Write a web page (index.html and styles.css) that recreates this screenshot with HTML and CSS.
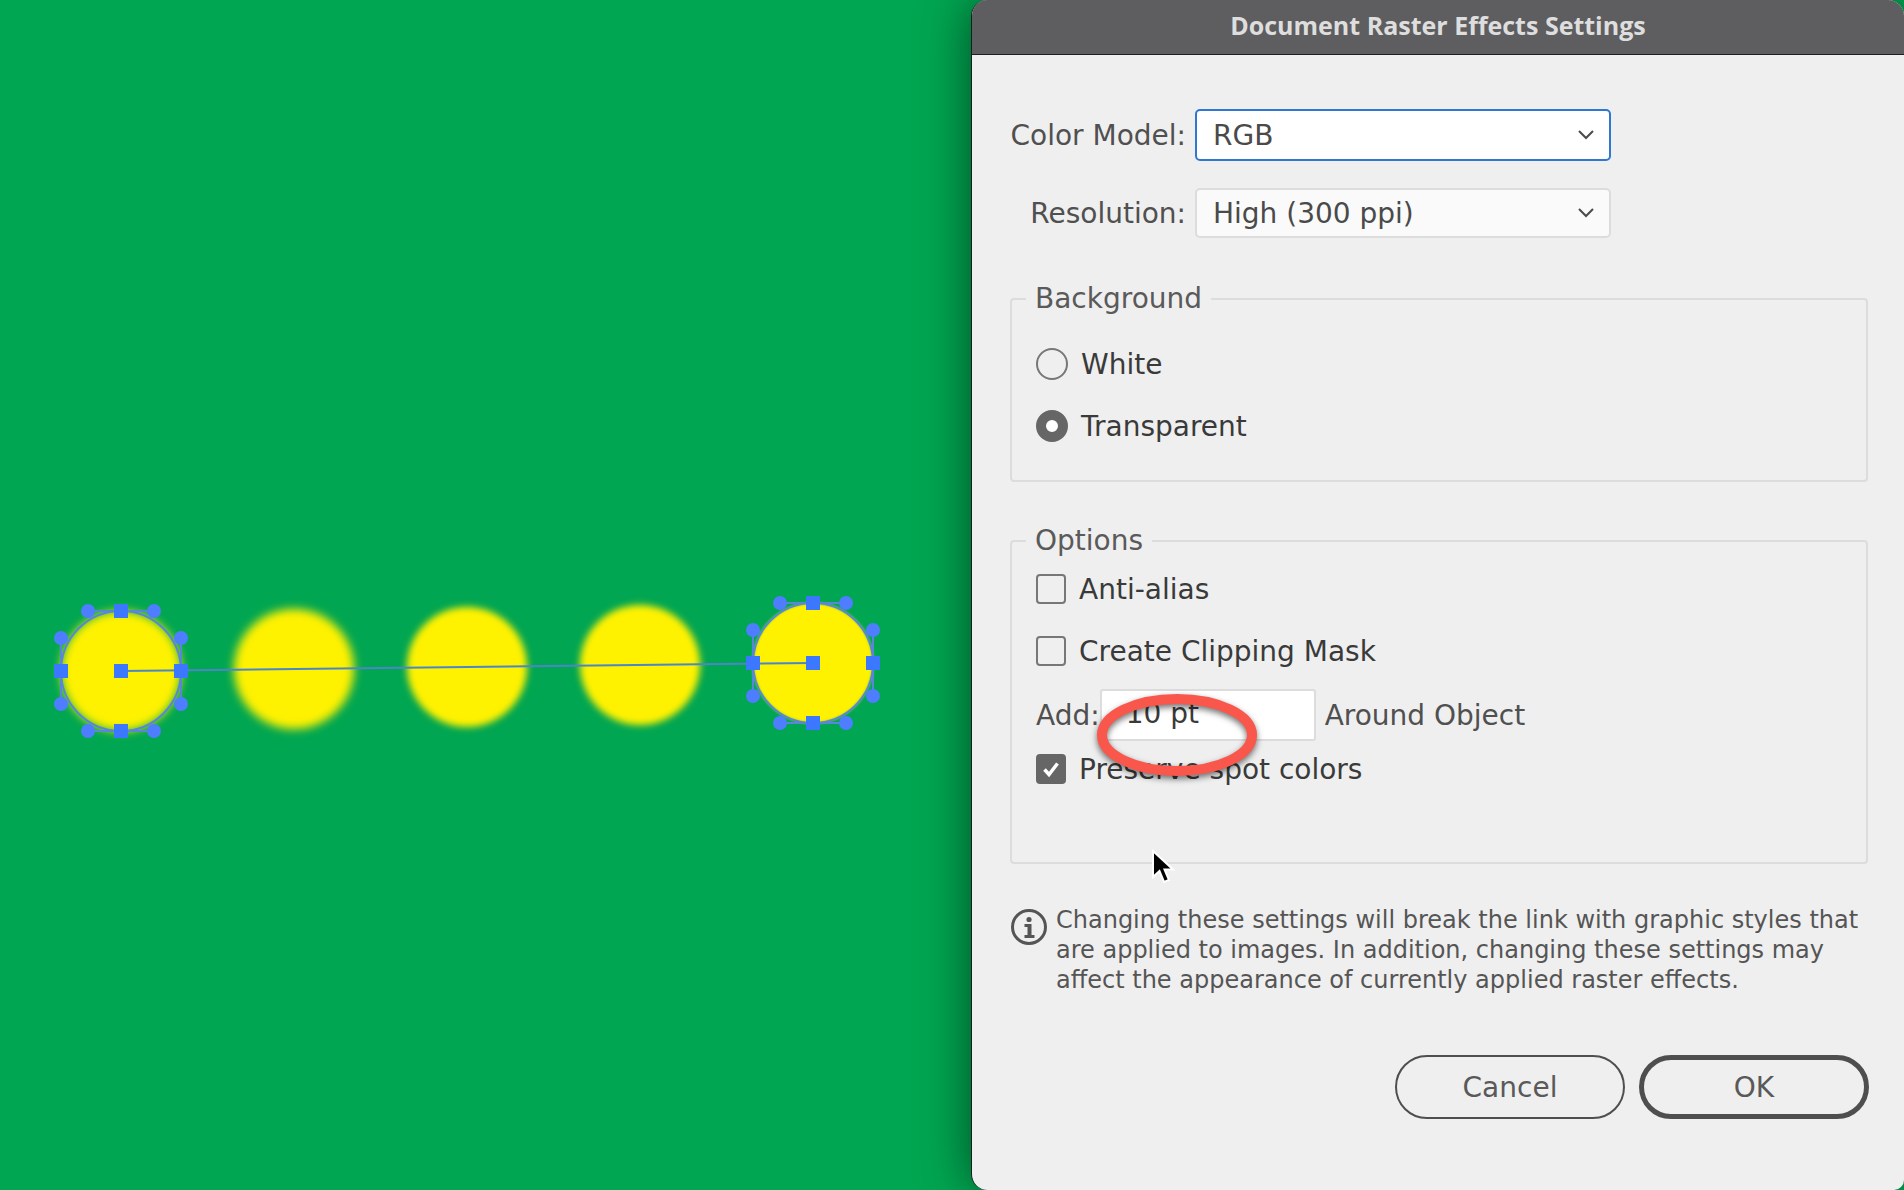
FILE: index.html
```html
<!DOCTYPE html>
<html lang="en">

<head>
    <meta charset="UTF-8">
    <meta name="viewport" content="width=device-width, initial-scale=1.0">
    <title>Document Raster Effects Settings</title>
    <link rel="stylesheet" href="styles.css">
</head>

<body>
    <div class="artboard">
        <svg class="art" width="972" height="1190" viewBox="0 0 972 1190">
            <defs>
                <filter id="soft1" x="-30%" y="-30%" width="160%" height="160%"><feGaussianBlur stdDeviation="5"></feGaussianBlur></filter>
                <filter id="soft2" x="-30%" y="-30%" width="160%" height="160%"><feGaussianBlur stdDeviation="3.5"></feGaussianBlur></filter>
                <filter id="soft3" x="-30%" y="-30%" width="160%" height="160%"><feGaussianBlur stdDeviation="1.5"></feGaussianBlur></filter>
            </defs>
            <circle class="dot" cx="121" cy="671" r="60" filter="url(#soft1)"></circle>
            <circle class="dot" cx="294" cy="669" r="60" filter="url(#soft1)"></circle>
            <circle class="dot" cx="467" cy="667" r="60" filter="url(#soft2)"></circle>
            <circle class="dot" cx="640" cy="665" r="60" filter="url(#soft2)"></circle>
            <circle class="dot" cx="813" cy="663" r="60" filter="url(#soft3)"></circle>

            <line class="spine" x1="121" y1="671" x2="813" y2="663"></line>

            <g transform="translate(121 671)">
                <use href="#handles"></use>
            </g>
            <g transform="translate(813 663)">
                <g id="handles">
                    <circle class="outline" r="60"></circle>
                    <path class="arms" d="M-33 -60H33M-33 60H33M-60 -33V33M60 -33V33"></path>
                    <circle class="knob" cx="-33" cy="-60" r="7"></circle>
                    <circle class="knob" cx="33" cy="-60" r="7"></circle>
                    <circle class="knob" cx="-33" cy="60" r="7"></circle>
                    <circle class="knob" cx="33" cy="60" r="7"></circle>
                    <circle class="knob" cx="-60" cy="-33" r="7"></circle>
                    <circle class="knob" cx="-60" cy="33" r="7"></circle>
                    <circle class="knob" cx="60" cy="-33" r="7"></circle>
                    <circle class="knob" cx="60" cy="33" r="7"></circle>
                    <rect class="anchor" x="-7" y="-67" width="14" height="14"></rect>
                    <rect class="anchor" x="-7" y="53" width="14" height="14"></rect>
                    <rect class="anchor" x="-67" y="-7" width="14" height="14"></rect>
                    <rect class="anchor" x="53" y="-7" width="14" height="14"></rect>
                    <rect class="anchor" x="-7" y="-7" width="14" height="14"></rect>
                </g>
            </g>
        </svg>
    </div>

    <div class="dialog">
        <div class="titlebar">Document Raster Effects Settings</div>

        <div class="content">
            <div class="field field-first">
                <label class="field-label">Color Model:</label>
                <div class="select select-focus">
                    <span>RGB</span>
                    <svg class="chevron" width="18" height="12" viewBox="0 0 18 12"><path d="M2 2l7 7 7-7"></path></svg>
                </div>
            </div>
            <div class="field">
                <label class="field-label">Resolution:</label>
                <div class="select">
                    <span>High (300 ppi)</span>
                    <svg class="chevron" width="18" height="12" viewBox="0 0 18 12"><path d="M2 2l7 7 7-7"></path></svg>
                </div>
            </div>

            <div class="group group-bg">
                <div class="legend">Background</div>
                <div class="option">
                    <span class="radio"></span>
                    <span>White</span>
                </div>
                <div class="option">
                    <span class="radio radio-on"></span>
                    <span>Transparent</span>
                </div>
            </div>

            <div class="group group-opts">
                <div class="legend">Options</div>
                <div class="option">
                    <span class="check"></span>
                    <span>Anti-alias</span>
                </div>
                <div class="option">
                    <span class="check"></span>
                    <span>Create Clipping Mask</span>
                </div>
                <div class="add-row">
                    <span class="add-label">Add:</span>
                    <div class="add-input">10 pt</div>
                    <span class="add-label">Around Object</span>
                </div>
                <div class="option option-last">
                    <span class="check check-on">
                        <svg width="22" height="22" viewBox="0 0 22 22"><path d="M4.5 11.5l4.5 5 8.5-11"></path></svg>
                    </span>
                    <span>Preserve spot colors</span>
                </div>
            </div>

            <div class="note">
                <svg class="note-icon" width="38" height="38" viewBox="0 0 38 38">
                    <circle cx="19" cy="19" r="16.5"></circle>
                    <circle class="ink" cx="19" cy="11.5" r="2.6"></circle>
                    <path class="ink" d="M14.5 16h7v11h3v3h-10v-3h3v-8h-3z"></path>
                </svg>
                <p>Changing these settings will break the link with graphic styles that are applied to images. In addition, changing these settings may affect the appearance of currently applied raster effects.</p>
            </div>

            <div class="buttons">
                <button class="btn" type="button">Cancel</button>
                <button class="btn btn-default" type="button">OK</button>
            </div>
        </div>

        <!-- annotation drawn over the Add field -->
        <svg class="ring" width="176" height="96" viewBox="0 0 176 96">
            <ellipse cx="86" cy="46" rx="75" ry="36"></ellipse>
        </svg>
        <svg class="cursor" width="28" height="38" viewBox="0 0 28 38">
            <path d="M2 2v26l6.500-6 4.500 11 5-2-4.500-10.500h8.500z"></path>
        </svg>
    </div>
</body>

</html>
```

FILE: styles.css
```css
* {
    box-sizing: border-box;
}

html,
body {
    margin: 0;
    height: 100%;
    overflow: hidden;
}

body {
    display: flex;
    background-color: #00a651;
    font-family: "DejaVu Sans", sans-serif;
    color: #4a4a4a;
}

.artboard {
    width: 971px;
    flex-shrink: 0;
}

.art {
    display: block;
}

.dot {
    fill: #fff200;
}

.spine {
    stroke: #4a86c8;
    stroke-width: 2;
}

.outline {
    fill: none;
    stroke: #5b86d8;
    stroke-width: 2;
}

.arms {
    fill: none;
    stroke: #5b86d8;
    stroke-width: 2;
}

.knob {
    fill: #4f7dff;
}

.anchor {
    fill: #3b78ff;
}

.dialog {
    position: relative;
    flex: 1;
    height: 1190px;
    background-color: #efefef;
    border-left: 1px solid #1c1c1c;
    border-radius: 16px 16px 10px 16px;
    box-shadow: 0 0 50px rgba(0, 0, 0, 0.55);
    overflow: hidden;
}

.titlebar {
    height: 55px;
    padding-top: 5px;
    line-height: 40px;
    text-align: center;
    background-color: #5e5e60;
    border-bottom: 1px solid #1e1e1e;
    color: #dedede;
    font-family: "Open Sans", sans-serif;
    font-size: 25px;
    font-weight: 700;
}

.content {
    padding: 54px 34px 0 38px;
}

.field {
    display: flex;
    align-items: center;
    height: 52px;
    margin-top: 26px;
}

.field-first {
    margin-top: 0;
}

.field-label {
    width: 185px;
    padding-right: 9px;
    text-align: right;
    white-space: nowrap;
    font-size: 28px;
    color: #505050;
}

.select {
    display: flex;
    align-items: center;
    justify-content: space-between;
    width: 416px;
    height: 50px;
    padding: 0 14px 0 16px;
    background-color: #fafafa;
    border: 2px solid #dcdcdc;
    border-radius: 5px;
    font-size: 28px;
}

.select-focus {
    height: 52px;
    background-color: #fff;
    border-color: #2f77d0;
}

.chevron path {
    fill: none;
    stroke: #4a4a4a;
    stroke-width: 2;
}

.group {
    position: relative;
    width: 858px;
    border: 2px solid #dcdcdc;
    border-radius: 4px;
}

.group-bg {
    height: 184px;
    margin-top: 59px;
    padding-top: 48px;
}

.group-opts {
    height: 324px;
    margin-top: 58px;
    padding-top: 31px;
}

.legend {
    position: absolute;
    top: -20px;
    left: 14px;
    padding: 0 9px;
    line-height: 38px;
    background-color: #efefef;
    font-size: 28px;
    color: #5a5a5a;
}

.option {
    display: flex;
    align-items: center;
    gap: 13px;
    height: 32px;
    margin: 0 0 30px 24px;
    font-size: 28px;
    color: #3a3a3a;
}

.option-last {
    margin-bottom: 0;
}

.radio {
    width: 32px;
    height: 32px;
    border: 2px solid #777;
    border-radius: 50%;
}

.radio-on {
    border: 10px solid #666;
    background-color: #fff;
}

.check {
    display: flex;
    align-items: center;
    justify-content: center;
    width: 30px;
    height: 30px;
    border: 2px solid #777;
    border-radius: 4px;
}

.check-on {
    background-color: #666;
    border-color: #666;
}

.check-on path {
    fill: none;
    stroke: #fff;
    stroke-width: 3.5;
}

.add-row {
    display: flex;
    align-items: center;
    height: 52px;
    margin: -8px 0 12px 24px;
    font-size: 28px;
}

.add-label {
    color: #505050;
}

.add-input {
    width: 216px;
    height: 52px;
    margin: 0 9px 0 0;
    padding-left: 24px;
    line-height: 46px;
    background-color: #fff;
    border: 2px solid #dcdcdc;
    border-radius: 3px;
    color: #3a3a3a;
}

.note {
    display: flex;
    gap: 8px;
    margin: 41px 0 0 0;
}

.note-icon {
    flex-shrink: 0;
    margin-top: 3px;
}

.note-icon circle {
    fill: none;
    stroke: #555;
    stroke-width: 3;
}

.note-icon .ink {
    fill: #555;
    stroke: none;
}

.note p {
    width: 830px;
    margin: 0;
    font-size: 24px;
    line-height: 30px;
    color: #555;
}

.buttons {
    display: flex;
    justify-content: flex-end;
    gap: 14px;
    width: 859px;
    margin-top: 60px;
}

.btn {
    width: 230px;
    height: 64px;
    padding: 0;
    background-color: #efefef;
    border: 2px solid #4e4e4e;
    border-radius: 32px;
    font-family: "DejaVu Sans", sans-serif;
    font-size: 28px;
    color: #595959;
}

.btn-default {
    border-width: 5px;
}

.ring {
    position: absolute;
    top: 689px;
    left: 119px;
    overflow: visible;
    filter: drop-shadow(0 3px 3px rgba(0, 0, 0, 0.55));
}

.ring ellipse {
    fill: none;
    stroke: #f9574c;
    stroke-width: 10;
}

.cursor {
    position: absolute;
    top: 849px;
    left: 179px;
}

.cursor path {
    fill: #000;
    stroke: #fff;
    stroke-width: 2;
}
```
